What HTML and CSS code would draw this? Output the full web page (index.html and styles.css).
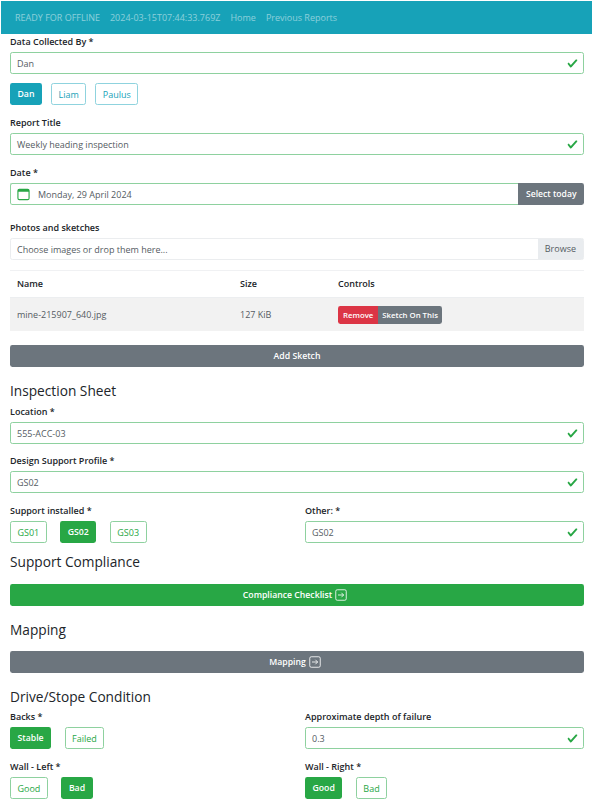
FILE: index.html
```html
<!DOCTYPE html>
<html lang="en">
<head>
    <meta charset="UTF-8">
    <meta name="viewport" content="width=device-width, initial-scale=1.0">
    <title>Inspection Report</title>
    <link rel="stylesheet" href="styles.css">
</head>
<body>
    <nav class="navbar">
        <span>READY FOR OFFLINE</span>
        <span>2024-03-15T07:44:33.769Z</span>
        <a href="#">Home</a>
        <a href="#">Previous Reports</a>
    </nav>

    <main class="content">
        <div class="group tight">
            <label>Data Collected By *</label>
            <div class="input valid"><span>Dan</span><svg class="tick" viewBox="0 0 8 8"><path d="M2.3 6.73L.6 4.53c-.4-1.04.46-1.4 1.1-.8l1.1 1.4 3.4-3.8c.6-.63 1.6-.27 1.2.7l-4 4.6c-.43.5-.8.4-1.1.1z"/></svg></div>
        </div>
        <div class="choices people">
            <button class="btn info">Dan</button>
            <button class="btn info-outline">Liam</button>
            <button class="btn info-outline">Paulus</button>
        </div>

        <div class="group">
            <label>Report Title</label>
            <div class="input valid"><span>Weekly heading inspection</span><svg class="tick" viewBox="0 0 8 8"><path d="M2.3 6.73L.6 4.53c-.4-1.04.46-1.4 1.1-.8l1.1 1.4 3.4-3.8c.6-.63 1.6-.27 1.2.7l-4 4.6c-.43.5-.8.4-1.1.1z"/></svg></div>
        </div>

        <div class="group wide">
            <label>Date *</label>
            <div class="input-group">
                <div class="input valid date">
                    <svg class="calendar" viewBox="0 0 14 14"><rect x="1" y="1.5" width="12" height="11" rx="1.5" fill="none" stroke="#28a745" stroke-width="1.2"/><path d="M1 2.5a1 1 0 0 1 1-1h10a1 1 0 0 1 1 1V4H1z" fill="#28a745"/></svg>
                    <span>Monday, 29 April 2024</span>
                </div>
                <button class="btn secondary today">Select today</button>
            </div>
        </div>

        <div class="group">
            <label>Photos and sketches</label>
            <div class="file-input">
                <span class="file-text">Choose images or drop them here...</span>
                <span class="file-browse">Browse</span>
            </div>
        </div>

        <table class="files">
            <thead>
                <tr><th>Name</th><th>Size</th><th>Controls</th></tr>
            </thead>
            <tbody>
                <tr>
                    <td>mine-215907_640.jpg</td>
                    <td>127 KiB</td>
                    <td>
                        <div class="btn-group">
                            <button class="btn small danger">Remove</button>
                            <button class="btn small secondary">Sketch On This</button>
                        </div>
                    </td>
                </tr>
            </tbody>
        </table>

        <button class="btn secondary block">Add Sketch</button>

        <h4 class="section first">Inspection Sheet</h4>
        <div class="group tight">
            <label>Location *</label>
            <div class="input valid"><span>555-ACC-03</span><svg class="tick" viewBox="0 0 8 8"><path d="M2.3 6.73L.6 4.53c-.4-1.04.46-1.4 1.1-.8l1.1 1.4 3.4-3.8c.6-.63 1.6-.27 1.2.7l-4 4.6c-.43.5-.8.4-1.1.1z"/></svg></div>
        </div>
        <div class="group">
            <label>Design Support Profile *</label>
            <div class="input valid"><span>GS02</span><svg class="tick" viewBox="0 0 8 8"><path d="M2.3 6.73L.6 4.53c-.4-1.04.46-1.4 1.1-.8l1.1 1.4 3.4-3.8c.6-.63 1.6-.27 1.2.7l-4 4.6c-.43.5-.8.4-1.1.1z"/></svg></div>
        </div>

        <div class="row">
            <div>
                <label>Support installed *</label>
                <div class="choices">
                    <button class="btn success-outline">GS01</button>
                    <button class="btn success">GS02</button>
                    <button class="btn success-outline">GS03</button>
                </div>
            </div>
            <div>
                <label>Other: *</label>
                <div class="input valid"><span>GS02</span><svg class="tick" viewBox="0 0 8 8"><path d="M2.3 6.73L.6 4.53c-.4-1.04.46-1.4 1.1-.8l1.1 1.4 3.4-3.8c.6-.63 1.6-.27 1.2.7l-4 4.6c-.43.5-.8.4-1.1.1z"/></svg></div>
            </div>
        </div>

        <h4 class="section compliance">Support Compliance</h4>
        <button class="btn success block">Compliance Checklist <svg class="go" viewBox="0 0 16 16"><rect x="1" y="1" width="14" height="14" rx="2" fill="none" stroke="currentColor" stroke-width="1.1"/><path d="M4 8h7.5M8.5 5l3 3-3 3" fill="none" stroke="currentColor" stroke-width="1.1"/></svg></button>

        <h4 class="section mapping">Mapping</h4>
        <button class="btn secondary block">Mapping <svg class="go" viewBox="0 0 16 16"><rect x="1" y="1" width="14" height="14" rx="2" fill="none" stroke="currentColor" stroke-width="1.1"/><path d="M4 8h7.5M8.5 5l3 3-3 3" fill="none" stroke="currentColor" stroke-width="1.1"/></svg></button>

        <h4 class="section drive">Drive/Stope Condition</h4>
        <div class="row cond">
            <div>
                <label>Backs *</label>
                <div class="choices">
                    <button class="btn success">Stable</button>
                    <button class="btn success-outline">Failed</button>
                </div>
            </div>
            <div>
                <label>Approximate depth of failure</label>
                <div class="input valid"><span>0.3</span><svg class="tick" viewBox="0 0 8 8"><path d="M2.3 6.73L.6 4.53c-.4-1.04.46-1.4 1.1-.8l1.1 1.4 3.4-3.8c.6-.63 1.6-.27 1.2.7l-4 4.6c-.43.5-.8.4-1.1.1z"/></svg></div>
            </div>
        </div>
        <div class="row cond">
            <div>
                <label>Wall - Left *</label>
                <div class="choices">
                    <button class="btn success-outline">Good</button>
                    <button class="btn success">Bad</button>
                </div>
            </div>
            <div>
                <label>Wall - Right *</label>
                <div class="choices">
                    <button class="btn success">Good</button>
                    <button class="btn success-outline">Bad</button>
                </div>
            </div>
        </div>
    </main>
</body>
</html>
```

FILE: styles.css
```css
html, body {
    height: 804px;
    overflow: hidden;
}
body {
    margin: 0;
    padding: 1px 1px 0;
    font-family: "Open Sans", sans-serif;
    font-size: 9px;
    line-height: 14px;
    color: #212529;
    background-color: #fff;
}
.navbar {
    display: flex;
    align-items: center;
    gap: 10px;
    height: 33px;
    padding: 0 14px;
    background-color: #17a2b8;
    color: rgba(255, 255, 255, 0.5);
}
.navbar a {
    color: inherit;
    text-decoration: none;
}
.content {
    padding: 0 8px 0 9px;
}
label {
    display: block;
    padding-top: 1px;
    margin-bottom: 3px;
    font-weight: 600;
}
.group {
    margin-bottom: 10px;
}
.group.tight {
    margin-bottom: 9px;
}
.group.wide {
    margin-bottom: 15px;
}
.input {
    display: flex;
    align-items: center;
    justify-content: space-between;
    height: 22px;
    padding: 0 6px;
    border: 1px solid #8ed19f;
    border-radius: 2.4px;
    color: #555c63;
    box-sizing: border-box;
}
.input span {
    padding-top: 1px;
}
.tick {
    width: 11px;
    height: 11px;
    margin-right: -1px;
    fill: #28a745;
}
.btn {
    height: 22px;
    padding: 0 6.5px;
    font-family: inherit;
    font-size: 9px;
    font-weight: 600;
    border: 1px solid transparent;
    border-radius: 2.4px;
    box-sizing: border-box;
}
.btn.info {
    background-color: #17a2b8;
    color: #fff;
    font-size: 8.7px;
}
.btn.info-outline {
    background-color: #fff;
    border-color: #8fd3de;
    color: #17a2b8;
    font-weight: 400;
}
.btn.success {
    background-color: #28a745;
    color: #fff;
    font-size: 8.7px;
}
.btn.success-outline {
    background-color: #fff;
    border-color: #8ed19f;
    color: #28a745;
    font-weight: 400;
}
.btn.secondary {
    background-color: #6c757d;
    color: #fff;
}
.btn.danger {
    background-color: #dc3545;
    color: #fff;
}
.btn.block {
    display: flex;
    align-items: center;
    justify-content: center;
    gap: 3px;
    width: 100%;
    font-size: 8.7px;
}
.choices {
    display: flex;
    gap: 13.5px;
}
.choices.people {
    gap: 9px;
    margin-bottom: 10px;
}
.input-group {
    display: flex;
}
.input.date {
    flex: 1;
    justify-content: flex-start;
    gap: 8px;
    border-right: 0;
    border-radius: 2.4px 0 0 2.4px;
}
.calendar {
    width: 13px;
    height: 13px;
}
.btn.today {
    font-size: 8.6px;
    border-radius: 0 2.4px 2.4px 0;
}
.file-input {
    display: flex;
    align-items: center;
    justify-content: space-between;
    height: 22px;
    border: 1px solid #ebedef;
    border-radius: 2.4px;
    box-sizing: border-box;
    color: #555c63;
}
.file-text {
    padding: 1px 0 0 6px;
}
.file-browse {
    align-self: stretch;
    display: flex;
    align-items: center;
    padding: 0 7px;
    background-color: #e9ecef;
}
.files {
    width: 100%;
    margin-bottom: 14px;
    border-collapse: collapse;
    border-top: 1px solid #f0f1f3;
}
.files th {
    height: 26px;
    padding: 0 7px;
    font-weight: 600;
    text-align: left;
    border-bottom: 1px solid #eceef0;
}
.files td {
    height: 33px;
    padding: 0 7px;
    color: #555c63;
    background-color: #f2f2f2;
}
.files th:nth-child(1) { width: 209px; }
.files th:nth-child(2) { width: 84px; }
.btn-group {
    display: flex;
}
.btn.small {
    height: 18px;
    padding: 0 4px;
    font-size: 7.8px;
}
.btn.small.danger {
    border-radius: 2.4px 0 0 2.4px;
}
.btn.small.secondary {
    padding: 0 3px;
    border-radius: 0 2.4px 2.4px 0;
}
.section {
    margin: 0 0 5px;
    font-size: 13.7px;
    line-height: 17px;
    font-weight: 400;
}
.section.first {
    margin-top: 15px;
}
.section.compliance {
    margin-top: 10px;
    margin-bottom: 14px;
}
.section.mapping {
    margin-top: 15px;
    margin-bottom: 13px;
}
.section.drive {
    margin-top: 15px;
    margin-bottom: 4px;
}
.row {
    display: grid;
    grid-template-columns: 1fr 279px;
    gap: 10px;
}
.row.cond {
    margin-bottom: 10px;
}
.go {
    width: 12px;
    height: 12px;
    margin-right: 4px;
}
```
